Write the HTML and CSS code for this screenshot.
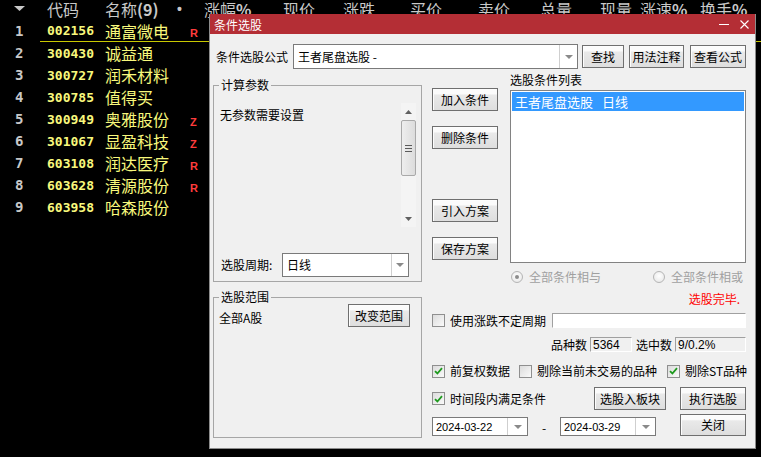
FILE: index.html
```html
<!DOCTYPE html>
<html lang="zh-CN">
<head>
<meta charset="utf-8">
<title>条件选股</title>
<link rel="stylesheet" href="styles.css">
</head>
<body>
<div class="quote">
  <div class="qhead">
    <span class="h-arrow"><svg width="11" height="5" viewBox="0 0 11 5"><path d="M0 0H11L5.5 5Z" fill="#c8c8c8"/></svg></span>
    <span class="h-code">代码</span>
    <span class="h-name">名称<b>(9)</b></span>
    <span class="h-dot">•</span>
    <span class="h-zf">涨幅<b>%</b></span>
    <span class="h-xj">现价</span>
    <span class="h-zd">涨跌</span>
    <span class="h-mr">买价</span>
    <span class="h-mc">卖价</span>
    <span class="h-zl">总量</span>
    <span class="h-xl">现量</span>
    <span class="h-zs">涨速<b>%</b></span>
    <span class="h-hs">换手<b>%</b></span>
  </div>
  <div class="qrow sel"><span class="no">1</span><div class="cells"><span class="code">002156</span><span class="name">通富微电</span><span class="flag">R</span></div></div>
  <div class="qrow"><span class="no">2</span><div class="cells"><span class="code">300430</span><span class="name">诚益通</span></div></div>
  <div class="qrow"><span class="no">3</span><div class="cells"><span class="code">300727</span><span class="name">润禾材料</span></div></div>
  <div class="qrow"><span class="no">4</span><div class="cells"><span class="code">300785</span><span class="name">值得买</span></div></div>
  <div class="qrow"><span class="no">5</span><div class="cells"><span class="code">300949</span><span class="name">奥雅股份</span><span class="flag">Z</span></div></div>
  <div class="qrow"><span class="no">6</span><div class="cells"><span class="code">301067</span><span class="name">显盈科技</span><span class="flag">Z</span></div></div>
  <div class="qrow"><span class="no">7</span><div class="cells"><span class="code">603108</span><span class="name">润达医疗</span><span class="flag">R</span></div></div>
  <div class="qrow"><span class="no">8</span><div class="cells"><span class="code">603628</span><span class="name">清源股份</span><span class="flag">R</span></div></div>
  <div class="qrow"><span class="no">9</span><div class="cells"><span class="code">603958</span><span class="name">哈森股份</span></div></div>
</div>

<div class="dlg">
  <div class="titlebar">
    <span class="ttl">条件选股</span>
    <span class="tb-min"></span>
    <svg class="tb-close" width="9" height="9" viewBox="0 0 9 9"><path d="M0.5 0.5L8.5 8.5M8.5 0.5L0.5 8.5" stroke="#fff" stroke-width="1.1"/></svg>
  </div>
  <div class="dbody">
    <div class="frow">
      <span class="flabel">条件选股公式</span>
      <div class="combo combo-formula">
        <span class="cval">王者尾盘选股 -</span>
        <span class="cbtn"><svg width="8" height="4" viewBox="0 0 8 4"><path d="M0 0H8L4 4Z" fill="#8a8a8a"/></svg></span>
      </div>
      <button class="btn b-find">查找</button>
      <button class="btn b-usage">用法注释</button>
      <button class="btn b-view">查看公式</button>
    </div>

    <div class="main">
      <div class="lcol">
        <fieldset class="grp grp-param">
          <legend>计算参数</legend>
          <div class="params">
            <div class="ptext">无参数需要设置</div>
            <div class="vscroll">
              <span class="sarrow"><svg width="7" height="4" viewBox="0 0 7 4"><path d="M0 4L3.5 0L7 4Z" fill="#606060"/></svg></span>
              <div class="strack">
                <div class="sthumb"><i></i><i></i><i></i></div>
              </div>
              <span class="sarrow"><svg width="7" height="4" viewBox="0 0 7 4"><path d="M0 0L3.5 4L7 0Z" fill="#606060"/></svg></span>
            </div>
          </div>
          <div class="period">
            <span class="plabel">选股周期:</span>
            <div class="combo combo-period">
              <span class="cval">日线</span>
              <span class="cbtn"><svg width="8" height="4" viewBox="0 0 8 4"><path d="M0 0H8L4 4Z" fill="#8a8a8a"/></svg></span>
            </div>
          </div>
        </fieldset>
        <fieldset class="grp grp-range">
          <legend>选股范围</legend>
          <div class="range-row">
            <span class="rtext">全部A股</span>
            <button class="btn b-range">改变范围</button>
          </div>
        </fieldset>
      </div>

      <div class="rcol">
        <div class="rtop">
          <div class="btncol">
            <button class="btn b-side">加入条件</button>
            <button class="btn b-side b-del">删除条件</button>
            <button class="btn b-side b-imp">引入方案</button>
            <button class="btn b-side b-save">保存方案</button>
          </div>
          <div class="listcol">
            <div class="lbl">选股条件列表</div>
            <div class="list">
              <div class="item sel">王者尾盘选股<span class="gap"></span>日线</div>
            </div>
          </div>
        </div>

        <div class="radios">
          <span class="ritem"><span class="radio on"><i></i></span>全部条件相与</span>
          <span class="ritem"><span class="radio"></span>全部条件相或</span>
        </div>

        <div class="status">选股完毕.</div>

        <div class="crow crow1">
          <span class="cb"></span>
          <span class="ctext">使用涨跌不定周期</span>
          <span class="sunken wide"></span>
        </div>

        <div class="counts">
          <span>品种数</span>
          <span class="sunken box-n1">5364</span>
          <span class="lbl-sel">选中数</span>
          <span class="sunken box-n2">9/0.2%</span>
        </div>

        <div class="crow crow2">
          <span class="cb"><svg width="9" height="8" viewBox="0 0 9 8"><path d="M1 4.2L3.4 6.5L8 1.2" fill="none" stroke="#1e9a1e" stroke-width="1.8"/></svg></span>
          <span class="ctext">前复权数据</span>
          <span class="cb cb-2"></span>
          <span class="ctext">剔除当前未交易的品种</span>
          <span class="cb cb-3"><svg width="9" height="8" viewBox="0 0 9 8"><path d="M1 4.2L3.4 6.5L8 1.2" fill="none" stroke="#1e9a1e" stroke-width="1.8"/></svg></span>
          <span class="ctext">剔除ST品种</span>
        </div>

        <div class="crow crow3">
          <span class="cb"><svg width="9" height="8" viewBox="0 0 9 8"><path d="M1 4.2L3.4 6.5L8 1.2" fill="none" stroke="#1e9a1e" stroke-width="1.8"/></svg></span>
          <span class="ctext">时间段内满足条件</span>
          <button class="btn b-block">选股入板块</button>
          <button class="btn b-run">执行选股</button>
        </div>

        <div class="daterow">
          <div class="combo combo-date">
            <span class="cval">2024-03-22</span>
            <span class="cbtn"><svg width="8" height="4" viewBox="0 0 8 4"><path d="M0 0H8L4 4Z" fill="#8a8a8a"/></svg></span>
          </div>
          <span class="dash">-</span>
          <div class="combo combo-date">
            <span class="cval">2024-03-29</span>
            <span class="cbtn"><svg width="8" height="4" viewBox="0 0 8 4"><path d="M0 0H8L4 4Z" fill="#8a8a8a"/></svg></span>
          </div>
          <button class="btn b-close">关闭</button>
        </div>
      </div>
    </div>
  </div>
</div>
</body>
</html>
```

FILE: styles.css
```css
* { box-sizing: border-box; }
html, body { margin: 0; padding: 0; }
body {
  width: 761px;
  height: 457px;
  overflow: hidden;
  position: relative;
  background: #000;
  font-family: "Noto Sans CJK SC", "Microsoft YaHei", sans-serif;
}

/* ---------- quote list ---------- */
.quote { color: #c8c8c8; }
.qhead {
  display: flex;
  height: 20px;
  font-size: 16px;
  line-height: 19px;
  white-space: nowrap;
  color: #c8c8c8;
}
.qhead > span { flex: none; }
.qhead b { font-weight: bold; }
.h-arrow { width: 47px; padding-left: 14px; display: flex; align-items: center; height: 17px; }
.h-code { width: 58px; }
.h-name { width: 72px; }
.h-dot { width: 27px; font: bold 14px/19px "Liberation Sans", sans-serif; }
.h-zf { width: 79px; }
.h-xj { width: 60px; }
.h-zd { width: 67px; }
.h-mr { width: 68px; }
.h-mc { width: 62px; }
.h-zl { width: 60px; }
.h-xl { width: 40px; }
.h-zs { width: 60px; }
.h-hs { width: 61px; }

.qrow { display: flex; height: 22px; }
.no {
  width: 40px;
  padding-left: 15px;
  font: bold 14px/22px "DejaVu Sans Mono", monospace;
  color: #c8c8c8;
}
.cells { flex: 1; display: flex; align-items: center; height: 22px; }
.qrow.sel .cells { border-bottom: 1px solid #c8c800; }
.code {
  width: 65px;
  padding-left: 7px;
  font: bold 13px "DejaVu Sans Mono", monospace;
  color: #f8f87c;
}
.name { width: 85px; font-size: 16px; line-height: 20px; color: #f8f87c; }
.flag {
  font: bold 11px "Liberation Sans", sans-serif;
  color: #ff3c3c;
  margin-top: 5px;
}

/* ---------- dialog ---------- */
.dlg {
  position: absolute;
  left: 209px;
  top: 14px;
  width: 547px;
  height: 435px;
  background: #f0f0f0;
  border: 1px solid #8c8c8c;
  border-top: 0;
  font-size: 12px;
  line-height: 14px;
  color: #000;
}
.titlebar {
  height: 20px;
  background: #b42e35;
  display: flex;
  align-items: center;
  color: #fff;
  padding: 1px 6px 0 4px;
}
.ttl { font-size: 12px; }
.tb-min {
  margin-left: auto;
  width: 10px;
  height: 1px;
  background: #fff;
}
.tb-close { margin-left: 11px; }

.frow {
  display: flex;
  align-items: center;
  height: 25px;
  margin-top: 10px;
  padding-left: 6px;
}
.flabel { width: 77px; }

.combo {
  display: flex;
  background: #fff;
  border: 1px solid #7a7a7a;
  align-items: stretch;
  flex: none;
}
.combo .cval { flex: 1; display: flex; align-items: center; padding-left: 4px; white-space: nowrap; }
.combo .cbtn {
  width: 18px;
  border-left: 1px solid #cfcfcf;
  display: flex;
  align-items: center;
  justify-content: center;
}
.combo-formula { width: 285px; height: 25px; }

.btn {
  font-family: "Noto Sans CJK SC", "Microsoft YaHei", sans-serif;
  font-size: 12px;
  line-height: 14px;
  color: #000;
  height: 23px;
  padding: 0;
  margin: 0;
  border: 1px solid #6f6f6f;
  border-radius: 0;
  background: linear-gradient(#fbfbfb 0, #fbfbfb 22%, #e9e9e9 30%, #dedede 100%);
  box-shadow: inset 1px 1px 0 #fdfdfd;
  flex: none;
}
.b-find { width: 42px; margin-left: 4px; }
.b-usage { width: 55px; margin-left: 5px; }
.b-view { width: 56px; margin-left: 6px; }

.main {
  display: flex;
  margin-top: 3px;
  padding-left: 3px;
}
.lcol { width: 209px; flex: none; }

.grp {
  margin: 0;
  padding: 0 5px 0 5px;
  border: 1px solid #a6a6a6;
  min-width: 0;
}
.grp legend {
  padding: 0 2px;
  font-size: 12px;
  line-height: 14px;
}
.grp-param { margin-top: 6px; height: 204px; }
.grp-range { margin-top: 8px; height: 148px; }

.params {
  display: flex;
  margin-top: 11px;
  height: 124px;
}
.ptext { flex: 1; padding: 5px 0 0 1px; }
.vscroll {
  width: 15px;
  display: flex;
  flex-direction: column;
  background: #f4f4f4;
}
.sarrow {
  height: 17px;
  display: flex;
  align-items: center;
  justify-content: center;
  flex: none;
}
.strack { flex: 1; }
.sthumb {
  height: 56px;
  border: 1px solid #a9a9a9;
  border-radius: 2px;
  background: linear-gradient(90deg, #eeeeee, #dcdcdc);
  display: flex;
  flex-direction: column;
  align-items: center;
  justify-content: center;
  gap: 2px;
}
.sthumb i { display: block; width: 7px; height: 1px; background: #5a5a5a; }

.period {
  display: flex;
  align-items: center;
  margin-top: 26px;
  height: 24px;
}
.plabel { width: 63px; padding-left: 2px; }
.combo-period { width: 127px; height: 24px; }
.combo-period .cbtn { width: 17px; }

.range-row {
  display: flex;
  justify-content: space-between;
  align-items: flex-start;
  padding-right: 6px;
}
.rtext { padding-top: 7px; }
.b-range { width: 62px; }

/* right column */
.rcol { width: 314px; margin-left: 10px; flex: none; }
.rtop { display: flex; height: 191px; }
.btncol {
  width: 66px;
  flex: none;
  display: flex;
  flex-direction: column;
  padding-top: 16px;
}
.b-side { width: 66px; }
.b-del { margin-top: 15px; }
.b-imp { margin-top: 50px; }
.b-save { margin-top: 15px; }

.listcol { margin-left: 12px; width: 236px; }
.lbl { margin-top: 1px; }
.list {
  margin-top: 3px;
  height: 173px;
  background: #fff;
  border: 1px solid #828282;
  padding: 1px;
}
.item {
  height: 19px;
  line-height: 19px;
  font-size: 13px;
  padding-left: 3px;
  white-space: nowrap;
}
.item.sel { background: #3399ff; color: #fff; }
.item .gap { display: inline-block; width: 9px; }

.radios {
  display: flex;
  justify-content: space-between;
  margin: 7px 3px 0 79px;
  height: 14px;
  color: #a0a0a0;
}
.ritem { display: flex; align-items: center; gap: 6px; }
.radio {
  width: 12px;
  height: 12px;
  border-radius: 50%;
  border: 1px solid #b5b5b5;
  background: radial-gradient(circle at 50% 40%, #ffffff, #e4e4e4);
  display: flex;
  align-items: center;
  justify-content: center;
}
.radio.on i { width: 4px; height: 4px; border-radius: 50%; background: #8c8c8c; }

.status {
  margin-top: 8px;
  text-align: right;
  padding-right: 6px;
  color: #ff0000;
}

.crow { display: flex; align-items: center; }
.cb {
  width: 13px;
  height: 13px;
  flex: none;
  border: 1px solid #8f8f8f;
  background: linear-gradient(135deg, #dcdcdc, #fafafa);
  display: flex;
  align-items: center;
  justify-content: center;
}
.ctext { margin-left: 5px; white-space: nowrap; }
.crow1 { margin-top: 7px; height: 15px; }
.sunken {
  border: 1px solid;
  border-color: #a0a0a0 #ffffff #ffffff #a0a0a0;
  height: 15px;
  display: flex;
  align-items: center;
  padding-left: 2px;
  font-family: "Liberation Sans", sans-serif;
  font-size: 12px;
}
.wide { flex: 1; margin-left: 6px; background: #fff; }

.counts {
  display: flex;
  justify-content: flex-end;
  align-items: center;
  margin-top: 9px;
  height: 15px;
}
.box-n1 { width: 42px; margin-left: 3px; background: #f0f0f0; }
.lbl-sel { margin-left: 4px; }
.box-n2 { width: 71px; margin-left: 3px; background: #f0f0f0; }

.crow2 { margin-top: 12px; height: 14px; }
.cb-2 { margin-left: 9px; }
.cb-3 { margin-left: 10px; }

.crow3 { margin-top: 9px; height: 23px; }
.b-block { width: 72px; margin-left: auto; }
.b-run { width: 66px; margin-left: 14px; }

.daterow {
  display: flex;
  align-items: flex-end;
  margin-top: 4px;
  height: 22px;
}
.combo-date { width: 96px; height: 19px; }
.combo-date .cval { font-family: "Liberation Sans", sans-serif; font-size: 11px; padding-left: 3px; }
.combo-date .cbtn { width: 20px; }
.dash { width: 32px; text-align: center; line-height: 16px; }
.b-close { width: 66px; height: 22px; margin-left: auto; }
```
